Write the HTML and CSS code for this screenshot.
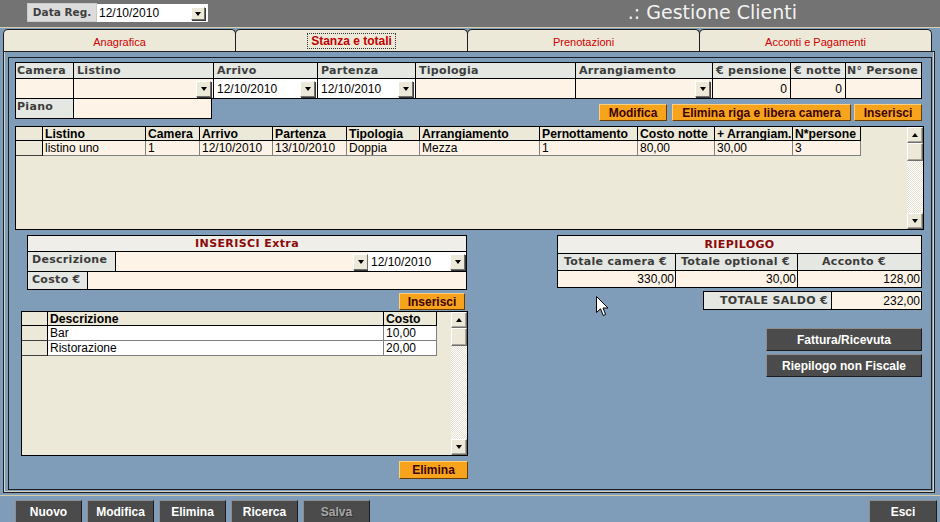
FILE: index.html
```html
<!DOCTYPE html>
<html lang="it">
<head>
<meta charset="utf-8">
<title>Gestione Clienti</title>
<link rel="stylesheet" href="styles.css">
</head>
<body>
<div class="topbar">
  <div class="datareg">
    <div class="dr-label">Data Reg.</div>
    <div class="dr-date"><span>12/10/2010</span><i class="dd"></i></div>
  </div>
  <div class="apptitle">.: Gestione Clienti</div>
</div>

<div class="tabs">
  <div class="tab">Anagrafica</div>
  <div class="tab active"><span class="focus">Stanza e totali</span></div>
  <div class="tab">Prenotazioni</div>
  <div class="tab">Acconti e Pagamenti</div>
</div>

<div class="tabpage">
  <div class="panel">
    <div class="fgrid">
      <div class="h h-first">Camera</div>
      <div class="h">Listino</div>
      <div class="h">Arrivo</div>
      <div class="h">Partenza</div>
      <div class="h">Tipologia</div>
      <div class="h">Arrangiamento</div>
      <div class="h">€ pensione</div>
      <div class="h">€ notte</div>
      <div class="h h-tight">N° Persone</div>
      <div class="c"></div>
      <div class="c combo"><span></span><i class="dd"></i></div>
      <div class="c combo white"><span>12/10/2010</span><i class="dd"></i></div>
      <div class="c combo white"><span>12/10/2010</span><i class="dd"></i></div>
      <div class="c"></div>
      <div class="c combo"><span></span><i class="dd"></i></div>
      <div class="c num">0</div>
      <div class="c num">0</div>
      <div class="c"></div>
    </div>

    <div class="actionrow">
      <div class="piano">
        <div class="h h-first">Piano</div>
        <div class="c"></div>
      </div>
      <div class="btns">
        <button class="obtn w68">Modifica</button>
        <button class="obtn w177">Elimina riga e libera camera</button>
        <button class="obtn w68 ml3">Inserisci</button>
      </div>
    </div>

    <div class="t1">
      <div class="t1-cols">
        <div class="t1-row thead">
          <div class="sel"></div>
          <div>Listino</div>
          <div>Camera</div>
          <div>Arrivo</div>
          <div>Partenza</div>
          <div>Tipologia</div>
          <div>Arrangiamento</div>
          <div>Pernottamento</div>
          <div>Costo notte</div>
          <div>+ Arrangiam.</div>
          <div>N*persone</div>
        </div>
        <div class="t1-row tdata">
          <div class="sel"></div>
          <div>listino uno</div>
          <div>1</div>
          <div>12/10/2010</div>
          <div>13/10/2010</div>
          <div>Doppia</div>
          <div>Mezza</div>
          <div>1</div>
          <div>80,00</div>
          <div>30,00</div>
          <div>3</div>
        </div>
      </div>
      <div class="sb">
        <div class="sbbtn"><i class="up"></i></div>
        <div class="thumb"></div>
        <div class="track"></div>
        <div class="sbbtn"><i class="down"></i></div>
      </div>
    </div>

    <div class="lower">
      <div class="leftcol">
        <div class="xbox">
          <div class="xtitle">INSERISCI Extra</div>
          <div class="xrow xrow1">
            <div class="lbl w88">Descrizione</div>
            <div class="xin combo"><span></span><i class="dd"></i></div>
            <div class="xdate combo"><span>12/10/2010</span><i class="dd"></i></div>
          </div>
          <div class="xrow xrow2">
            <div class="lbl w60">Costo €</div>
            <div class="xin"></div>
          </div>
        </div>
        <button class="obtn ins2">Inserisci</button>
        <div class="t2">
          <div class="t2-cols">
            <div class="t2-row thead">
              <div class="sel"></div>
              <div>Descrizione</div>
              <div>Costo</div>
            </div>
            <div class="t2-row t2data">
              <div class="sel"></div>
              <div>Bar</div>
              <div>10,00</div>
            </div>
            <div class="t2-row t2data">
              <div class="sel"></div>
              <div>Ristorazione</div>
              <div>20,00</div>
            </div>
          </div>
          <div class="sb">
            <div class="sbbtn"><i class="up"></i></div>
            <div class="thumb"></div>
            <div class="track"></div>
            <div class="sbbtn"><i class="down"></i></div>
          </div>
        </div>
        <button class="obtn elim">Elimina</button>
      </div>

      <div class="rightcol">
        <div class="riep">
          <div class="rtitle">RIEPILOGO</div>
          <div class="h rh1">Totale camera €</div>
          <div class="h rh2">Totale optional €</div>
          <div class="h rh3">Acconto €</div>
          <div class="c num">330,00</div>
          <div class="c num">30,00</div>
          <div class="c num">128,00</div>
        </div>
        <div class="saldo">
          <div class="h sl">TOTALE SALDO €</div>
          <div class="c num">232,00</div>
        </div>
        <button class="gbtn big first">Fattura/Ricevuta</button>
        <button class="gbtn big">Riepilogo non Fiscale</button>
      </div>
    </div>
  </div>
</div>

<div class="bottombar">
  <button class="gbtn bb">Nuovo</button>
  <button class="gbtn bb">Modifica</button>
  <button class="gbtn bb">Elimina</button>
  <button class="gbtn bb">Ricerca</button>
  <button class="gbtn bb disabled">Salva</button>
  <button class="gbtn bb esci">Esci</button>
</div>

<svg class="cursor" width="13" height="21" viewBox="0 0 13 21"><path d="M0.5 0.5 L0.5 16.5 L4.5 12.8 L7.2 19.5 L9.6 18.5 L7 12 L12 12 Z" fill="#fff" stroke="#000" stroke-width="1"/></svg>
</body>
</html>
```
FILE: styles.css
```css
* { box-sizing: border-box; margin: 0; padding: 0; }
html, body { width: 940px; height: 522px; overflow: hidden; }
body {
  background: #7f9cb8;
  font-family: "Liberation Sans", Arial, sans-serif;
  font-size: 12px;
  color: #000;
  position: relative;
}
button { font-family: "Liberation Sans", Arial, sans-serif; cursor: default; }

/* top bar */
.topbar {
  height: 28px;
  background: #737373;
  border-bottom: 1px solid #d9cfae;
  display: flex;
  align-items: flex-start;
}
.datareg { display: flex; margin: 3px 0 0 27px; height: 19px; }
.dr-label {
  width: 70px;
  background: #dcdcdc;
  border: 1px solid #cacaca;
  font-family: "DejaVu Sans", sans-serif;
  font-weight: bold;
  font-size: 10.5px;
  color: #3f3f3f;
  line-height: 16px;
  text-align: center;
}
.dr-date {
  width: 111px;
  margin-top: 1px;
  height: 18px;
  background: #fff;
  display: flex;
  align-items: center;
  justify-content: space-between;
  padding: 0 3px 0 2px;
  font-size: 12px;
}
.apptitle {
  margin-left: auto;
  margin-right: 143px;
  font-family: "DejaVu Sans", sans-serif;
  font-size: 19px;
  color: #f2f2f2;
  line-height: 25px;
}

/* dropdown button */
.dd {
  width: 15px;
  height: 16px;
  flex: none;
  background: #ece9d8;
  border: 1px solid;
  border-color: #fff #6f6f6f #6f6f6f #fff;
  box-shadow: 1px 1px 0 #3a3a3a;
  display: flex;
  align-items: center;
  justify-content: center;
}
.dd::after {
  content: "";
  border-left: 3px solid transparent;
  border-right: 3px solid transparent;
  border-top: 4px solid #000;
  margin-top: 1px;
}
.dr-date .dd { height: 13px; width: 14px; }

/* tabs */
.tabs { display: flex; padding-left: 3px; margin-top: 1px; height: 22px; }
.tab {
  width: 233px;
  height: 22px;
  background: #ece9d8;
  border: 1px solid #1e1e1e;
  border-bottom: none;
  border-radius: 5px 5px 0 0;
  color: #d00000;
  font-size: 11px;
  text-align: center;
  line-height: 22px;
  padding-top: 1px;
}
.tab + .tab { margin-left: -1px; }
.tab.active { line-height: 20px; }
.focus {
  display: inline-block;
  border: 1px dotted #333;
  padding: 0 3px;
  line-height: 14px;
  font-weight: bold;
  font-size: 12px;
  color: #c00000;
}

/* tab page and panel */
.tabpage {
  margin-left: 3px;
  width: 932px;
  height: 442px;
  border: 1px solid #1e1e1e;
  box-shadow: inset 1px 0 0 #d8d4c4, inset -1px -1px 0 #d8d4c4;
  padding: 5px 2px 2px 4px;
}
.panel {
  width: 924px;
  height: 433px;
  border: 1px solid #1e1e1e;
  padding: 4px 0 0 6px;
}

/* form grid */
.fgrid {
  display: grid;
  grid-template-columns: 57px 139px 103px 97px 159px 136px 77px 54px 75px;
  grid-template-rows: 15px 19px;
  gap: 1px;
  background: #000;
  border: 1px solid #000;
  width: 907px;
}
.h {
  background: #e4e7e2;
  font-family: "DejaVu Sans", sans-serif;
  font-weight: bold;
  font-size: 11px;
  letter-spacing: 0.3px;
  color: #3c3c3c;
  padding-left: 3px;
  line-height: 15px;
  white-space: nowrap;
  overflow: hidden;
}
.h-first { padding-left: 1px; }
.h-tight { padding-left: 1px; letter-spacing: 0.2px; }
.c {
  background: #fdf3e6;
  display: flex;
  align-items: center;
  font-size: 12px;
  white-space: nowrap;
}
.c.num { justify-content: flex-end; padding-right: 3px; }
.c.white { background: #fff; }
.combo { justify-content: space-between; padding: 0 2px 0 2px; }
.combo > span { padding-left: 1px; }

/* piano + buttons */
.actionrow {
  display: flex;
  justify-content: space-between;
  align-items: flex-start;
  width: 907px;
  margin-top: -1px;
  height: 23px;
}
.piano {
  display: grid;
  grid-template-columns: 57px 137px;
  grid-template-rows: 19px;
  gap: 1px;
  background: #000;
  border: 1px solid #000;
}
.btns { display: flex; margin-top: 6px; gap: 5px; }
.ml3 { margin-left: -2px; }
.obtn {
  height: 17px;
  background: #f7a31c;
  border: 1px solid;
  border-color: #ffcf80 #6a3c00 #6a3c00 #ffcf80;
  color: #3d0400;
  font-weight: bold;
  font-size: 12px;
  line-height: 14px;
  text-align: center;
  padding: 0;
}
.w68 { width: 68px; }
.w177 { width: 179px; }

/* tables */
.t1 {
  margin-top: 5px;
  width: 909px;
  height: 104px;
  border: 1px solid #000;
  background: #ece9d8;
  display: flex;
}
.t1-cols { flex: 1; }
.t1-row {
  display: grid;
  grid-template-columns: 27px 103px 54px 73px 74px 73px 120px 98px 77px 78px 68px;
  width: 845px;
}
.thead > div {
  height: 14px;
  border-right: 1px solid #000;
  border-bottom: 1px solid #000;
  background: #ece9d8;
  font-weight: bold;
  font-size: 12.2px;
  line-height: 14px;
  padding-left: 2px;
  white-space: nowrap;
  overflow: hidden;
}
.tdata > div {
  height: 15px;
  border-right: 1px solid #808080;
  border-bottom: 1px solid #808080;
  background: #fcf3e6;
  font-size: 12px;
  line-height: 14px;
  padding-left: 2px;
  white-space: nowrap;
}
.thead > .sel, .tdata > .sel, .t2data > .sel {
  background: #ece9d8;
  border-right: 1px solid #000;
}
.tdata > .sel { border-bottom-color: #404040; }

/* scrollbar */
.sb {
  width: 16px;
  flex: none;
  display: flex;
  flex-direction: column;
  background-color: #ece9d8;
  background-image: repeating-conic-gradient(#ffffff 0 25%, #e4e1d0 0 50%);
  background-size: 2px 2px;
}
.sbbtn, .thumb {
  background: #ece9d8;
  border: 1px solid;
  border-color: #fff #6f6f6f #6f6f6f #fff;
  box-shadow: inset -1px -1px 0 #a8a597;
}
.sbbtn { height: 16px; display: flex; align-items: center; justify-content: center; }
.thumb { height: 18px; }
.track { flex: 1; }
.up { border-left: 3px solid transparent; border-right: 3px solid transparent; border-bottom: 4px solid #000; }
.down { border-left: 3px solid transparent; border-right: 3px solid transparent; border-top: 4px solid #000; }

/* lower area */
.lower { display: flex; margin-top: 5px; width: 907px; }
.leftcol { width: 447px; margin-left: 6px; display: flex; flex-direction: column; }
.xbox {
  margin-left: 6px;
  width: 440px;
  height: 55px;
  border: 1px solid #000;
  background: #000;
}
.xtitle {
  height: 16px;
  border-bottom: 1px solid #000;
  background: #efeee8;
  text-align: center;
  font-family: "DejaVu Sans", sans-serif;
  font-weight: bold;
  font-size: 11px;
  letter-spacing: 0.4px;
  color: #8a0a0a;
  line-height: 15px;
}
.xrow { display: flex; border-bottom: 1px solid #000; }
.xrow1 { height: 20px; }
.xrow2 { height: 17px; border-bottom: none; }
.lbl {
  background: #e4e7e2;
  border-right: 1px solid #000;
  font-family: "DejaVu Sans", sans-serif;
  font-weight: bold;
  font-size: 11px;
  letter-spacing: 0.3px;
  color: #3c3c3c;
  padding: 1px 0 0 4px;
  line-height: 13px;
}
.w88 { width: 88px; }
.w60 { width: 60px; }
.xin { flex: 1; background: #fdf3e6; display: flex; align-items: center; }
.xin.combo { padding: 0 0 0 2px; }
.xdate {
  width: 98px;
  background: #fff;
  display: flex;
  align-items: center;
  font-size: 12px;
  padding: 0 1px 0 2px;
}
.ins2 { align-self: flex-end; margin: 3px 3px 0 0; width: 66px; }

.t2 {
  margin-top: 1px;
  width: 447px;
  height: 145px;
  border: 1px solid #000;
  background: #ece9d8;
  display: flex;
}
.t2-cols { flex: 1; }
.t2-row { display: grid; grid-template-columns: 26px 336px 53px; width: 415px; }
.t2data > div {
  height: 15px;
  border-right: 1px solid #808080;
  border-bottom: 1px solid #808080;
  background: #fff;
  font-size: 12px;
  line-height: 14px;
  padding-left: 2px;
}
.t2data > .sel { border-bottom-color: #404040; }
.elim { align-self: flex-end; margin-top: 5px; width: 69px; height: 18px; }

.rightcol {
  margin-left: auto;
  display: flex;
  flex-direction: column;
  align-items: flex-end;
}
.riep {
  width: 365px;
  height: 53px;
  display: grid;
  grid-template-columns: 117px 121px 123px;
  grid-template-rows: 17px 16px 16px;
  gap: 1px;
  background: #000;
  border: 1px solid #000;
}
.rtitle {
  grid-column: 1 / 4;
  background: #efeee8;
  text-align: center;
  font-family: "DejaVu Sans", sans-serif;
  font-weight: bold;
  font-size: 11px;
  letter-spacing: 0.4px;
  color: #8a0a0a;
  line-height: 17px;
}
.riep .h { line-height: 16px; }
.rh1 { padding-left: 6px; }
.rh2 { padding-left: 5px; }
.rh3 { padding-left: 24px; }
.riep .c.num { padding-right: 1px; }
.saldo {
  margin-top: 3px;
  width: 219px;
  display: grid;
  grid-template-columns: 127px 89px;
  grid-template-rows: 17px;
  gap: 1px;
  background: #000;
  border: 1px solid #000;
}
.saldo .sl { text-align: right; padding-right: 3px; line-height: 17px; }
.saldo .c.num { padding-right: 1px; }

.gbtn {
  background: #4b4b4b;
  border: 1px solid;
  border-color: #8e8e8e #1c1c1c #1c1c1c #8e8e8e;
  color: #fff;
  font-weight: bold;
  font-size: 12px;
  text-align: center;
  padding: 0;
}
.big { width: 156px; height: 23px; margin-top: 3px; line-height: 20px; }
.big.first { margin-top: 18px; }

/* bottom bar */
.bottombar {
  margin-top: 2px;
  border-top: 1px solid #d6cfa3;
  padding: 4px 0 0 15px;
  display: flex;
  gap: 5px;
}
.bb { width: 67px; height: 24px; line-height: 20px; }
.bb.disabled { color: #a6a6a6; text-shadow: 1px 1px 0 #2e2e2e; }
.bb.esci { margin-left: auto; margin-right: 3px; width: 68px; }

.cursor { position: absolute; left: 596px; top: 296px; }
```
